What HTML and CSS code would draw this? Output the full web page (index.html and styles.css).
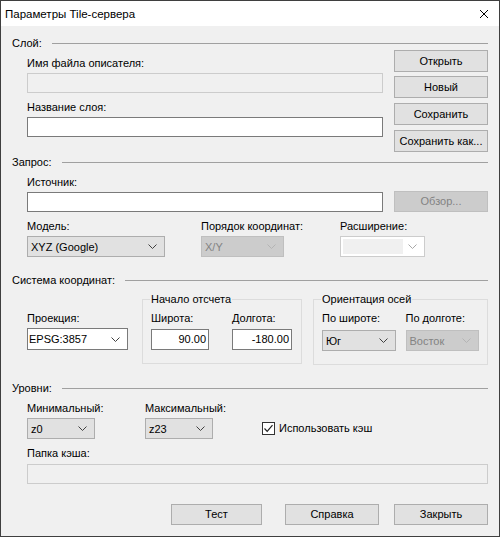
FILE: index.html
```html
<!DOCTYPE html>
<html lang="ru">
<head>
<meta charset="utf-8">
<title>Параметры Tile-сервера</title>
<link rel="stylesheet" href="styles.css">
</head>
<body>
<div class="window">
  <div class="titlebar">
    <span class="title">Параметры Tile-сервера</span>
    <svg class="close" width="10" height="10" viewBox="0 0 10 10"><path d="M1 1 L9 9 M9 1 L1 9" stroke="#000" stroke-width="1" fill="none"/></svg>
  </div>
  <div class="content">
    <div class="sect-head"><span>Слой:</span><div class="rule"></div></div>
    <div class="layer-body">
      <div class="col-main">
        <div class="lbl lbl-first">Имя файла описателя:</div>
        <div class="edit edit-disabled"></div>
        <div class="lbl lbl-second">Название слоя:</div>
        <div class="edit"></div>
      </div>
      <div class="col-btns">
        <div class="btn b1">Открыть</div>
        <div class="btn b2">Новый</div>
        <div class="btn b3">Сохранить</div>
        <div class="btn b3">Сохранить как...</div>
      </div>
    </div>

    <div class="sect-head head-query"><span>Запрос:</span><div class="rule"></div></div>
    <div class="query-body">
      <div class="lbl lbl-first">Источник:</div>
      <div class="src-row">
        <div class="edit src-edit"></div>
        <div class="btn btn-disabled browse">Обзор...</div>
      </div>
      <div class="model-row">
        <div class="fcol model-col">
          <div class="lbl">Модель:</div>
          <div class="combo"><span>XYZ (Google)</span><svg class="chev" width="9" height="5" viewBox="0 0 9 5"><path d="M0.5 0.5 L4.5 4.5 L8.5 0.5" stroke="#404040" fill="none"/></svg></div>
        </div>
        <div class="fcol order-col">
          <div class="lbl">Порядок координат:</div>
          <div class="combo combo-disabled"><span>X/Y</span><svg class="chev" width="9" height="5" viewBox="0 0 9 5"><path d="M0.5 0.5 L4.5 4.5 L8.5 0.5" stroke="#b4b4b4" fill="none"/></svg></div>
        </div>
        <div class="fcol ext-col">
          <div class="lbl">Расширение:</div>
          <div class="combo combo-edit-disabled"><span class="inner-fill"></span><svg class="chev" width="9" height="5" viewBox="0 0 9 5"><path d="M0.5 0.5 L4.5 4.5 L8.5 0.5" stroke="#a8a8a8" fill="none"/></svg></div>
        </div>
      </div>
    </div>

    <div class="sect-head head-coord"><span>Система координат:</span><div class="rule"></div></div>
    <div class="coord-body">
      <div class="fcol proj-col">
        <div class="lbl">Проекция:</div>
        <div class="combo combo-edit"><span>EPSG:3857</span><svg class="chev" width="9" height="5" viewBox="0 0 9 5"><path d="M0.5 0.5 L4.5 4.5 L8.5 0.5" stroke="#404040" fill="none"/></svg></div>
      </div>
      <fieldset class="group group-origin">
        <legend>Начало отсчета</legend>
        <div class="group-row">
          <div class="fcol lat-col">
            <div class="lbl">Широта:</div>
            <div class="edit num">90.00</div>
          </div>
          <div class="fcol lon-col">
            <div class="lbl">Долгота:</div>
            <div class="edit num">-180.00</div>
          </div>
        </div>
      </fieldset>
      <fieldset class="group group-axes">
        <legend>Ориентация осей</legend>
        <div class="group-row">
          <div class="fcol axis-col">
            <div class="lbl">По широте:</div>
            <div class="combo axis-combo"><span>Юг</span><svg class="chev" width="9" height="5" viewBox="0 0 9 5"><path d="M0.5 0.5 L4.5 4.5 L8.5 0.5" stroke="#404040" fill="none"/></svg></div>
          </div>
          <div class="fcol axis-col axis-col2">
            <div class="lbl">По долготе:</div>
            <div class="combo combo-disabled axis-combo"><span>Восток</span><svg class="chev" width="9" height="5" viewBox="0 0 9 5"><path d="M0.5 0.5 L4.5 4.5 L8.5 0.5" stroke="#b4b4b4" fill="none"/></svg></div>
          </div>
        </div>
      </fieldset>
    </div>

    <div class="sect-head head-levels"><span>Уровни:</span><div class="rule"></div></div>
    <div class="levels-body">
      <div class="levels-row">
        <div class="fcol zoom-col">
          <div class="lbl">Минимальный:</div>
          <div class="combo"><span>z0</span><svg class="chev" width="9" height="5" viewBox="0 0 9 5"><path d="M0.5 0.5 L4.5 4.5 L8.5 0.5" stroke="#404040" fill="none"/></svg></div>
        </div>
        <div class="fcol zoom-col zoom-col2">
          <div class="lbl">Максимальный:</div>
          <div class="combo"><span>z23</span><svg class="chev" width="9" height="5" viewBox="0 0 9 5"><path d="M0.5 0.5 L4.5 4.5 L8.5 0.5" stroke="#404040" fill="none"/></svg></div>
        </div>
        <div class="fcol cache-col">
          <div class="lbl lbl-spacer"></div>
          <div class="check-row">
            <span class="checkbox"><svg width="11" height="11" viewBox="0 0 11 11"><path d="M1.5 5.5 L4.2 8.3 L9.5 2.2" stroke="#202020" stroke-width="1.2" fill="none"/></svg></span>
            <span class="check-label">Использовать кэш</span>
          </div>
        </div>
      </div>
      <div class="lbl lbl-cache">Папка кэша:</div>
      <div class="edit edit-disabled cache-edit"></div>
    </div>

    <div class="footer">
      <div class="btn f-test">Тест</div>
      <div class="btn f-help">Справка</div>
      <div class="btn f-close">Закрыть</div>
    </div>
  </div>
</div>
</body>
</html>
```

FILE: styles.css
```css
html, body {
  margin: 0;
  padding: 0;
  background: #f0f0f0;
}
body {
  font-family: "Liberation Sans", Arial, sans-serif;
  font-size: 11px;
  color: #000;
}
.window {
  width: 500px;
  height: 537px;
  box-sizing: border-box;
  border: 1px solid #3f3f3f;
  background: #f0f0f0;
  overflow: hidden;
}
.titlebar {
  height: 25px;
  background: #fff;
  display: flex;
  align-items: center;
  justify-content: space-between;
  padding: 0 10px 0 4px;
}
.title {
  font-size: 11.5px;
  line-height: 15px;
  padding-top: 1px;
}
.close {
  display: block;
  margin-top: 1px;
}
.content {
  padding: 10px 11px 0 11px;
}
.sect-head {
  display: flex;
  align-items: center;
  height: 14px;
  line-height: 14px;
}
.sect-head span {
  white-space: nowrap;
}
.rule {
  flex: 1;
  height: 1px;
  background: #a0a0a0;
  margin-left: 10px;
  margin-top: 0;
}
.lbl {
  height: 15px;
  line-height: 15px;
  white-space: nowrap;
}
.edit {
  box-sizing: border-box;
  height: 20px;
  border: 1px solid #7a7a7a;
  background: #fff;
  line-height: 18px;
  padding: 0 2px;
}
.edit-disabled {
  border-color: #cccccc;
  background: #f0f0f0;
}
.btn {
  box-sizing: border-box;
  height: 22px;
  border: 1px solid #adadad;
  background: #e1e1e1;
  text-align: center;
  line-height: 20px;
  white-space: nowrap;
}
.btn-disabled {
  background: #cccccc;
  border-color: #bfbfbf;
  color: #838383;
}

/* Layer section */
.layer-body {
  display: flex;
  align-items: flex-start;
  margin-left: 15px;
}
.col-main {
  width: 356px;
}
.lbl-first {
  margin-top: 6px;
}
.col-main .edit {
  margin-top: 2px;
}
.lbl-second {
  margin-top: 7px;
}
.col-btns {
  width: 94px;
  margin-left: 11px;
}
.b2 {
  margin-top: 4px;
}
.b3 {
  margin-top: 5px;
}

/* Query section */
.head-query {
  margin-top: 3px;
}
.query-body {
  margin-left: 15px;
}
.src-row {
  display: flex;
  align-items: flex-start;
  margin-top: 1px;
  height: 21px;
}
.src-edit {
  width: 356px;
  margin-top: 1px;
}
.browse {
  width: 94px;
  height: 21px;
  line-height: 19px;
  margin-left: 11px;
}
.model-row {
  display: flex;
  margin-top: 7px;
}
.fcol {
  display: flex;
  flex-direction: column;
}
.combo {
  box-sizing: border-box;
  height: 21px;
  margin-top: 2px;
  border: 1px solid #adadad;
  background: #e1e1e1;
  display: flex;
  align-items: center;
  justify-content: space-between;
  padding: 0 7px 0 3px;
  white-space: nowrap;
}
.chev {
  display: block;
  flex: none;
}
.combo-disabled {
  background: #cccccc;
  border-color: #bfbfbf;
  color: #838383;
}
.combo-edit {
  background: #fff;
  border-color: #7a7a7a;
  padding-left: 1px;
}
.combo-edit-disabled {
  background: #fff;
  border-color: #cccccc;
  padding-left: 2px;
}
.inner-fill {
  display: block;
  width: 60px;
  height: 15px;
  background: #f0f0f0;
}
.model-col {
  width: 138px;
}
.order-col {
  width: 83px;
  margin-left: 36px;
}
.ext-col {
  width: 85px;
  margin-left: 56px;
}

/* Coordinate system section */
.head-coord {
  margin-top: 16px;
}
.coord-body {
  display: flex;
  align-items: flex-start;
  margin-left: 15px;
  margin-top: 5px;
}
.proj-col {
  width: 101px;
  padding-top: 19px;
}
.proj-col .combo {
  height: 22px;
  margin-top: 2px;
}
.group {
  margin: 0;
  border: 1px solid #dcdcdc;
  padding: 0 8px 13px 8px;
  min-width: 0;
}
.group legend {
  padding: 0 1px;
  margin-left: -1px;
  line-height: 14px;
  height: 14px;
}
.group-origin {
  width: 160px;
  box-sizing: border-box;
  margin-left: 14px;
}
.group-axes {
  width: 175px;
  box-sizing: border-box;
  margin-left: 11px;
}
.group-row {
  display: flex;
  padding-top: 5px;
}
.lat-col {
  width: 58px;
}
.lon-col {
  width: 60px;
  margin-left: 23px;
}
.num {
  height: 21px;
  margin-top: 3px;
  text-align: right;
  line-height: 19px;
  padding-right: 2px;
}
.axis-col {
  width: 74px;
}
.axis-col2 {
  margin-left: 10px;
}
.axis-combo {
  margin-top: 4px;
}

/* Levels section */
.head-levels {
  margin-top: 16px;
}
.levels-body {
  margin-left: 15px;
}
.levels-row {
  display: flex;
  margin-top: 6px;
}
.zoom-col {
  width: 68px;
}
.zoom-col2 {
  margin-left: 50px;
}
.cache-col {
  margin-left: 49px;
}
.check-row {
  display: flex;
  align-items: center;
  height: 21px;
  margin-top: 2px;
}
.checkbox {
  box-sizing: border-box;
  width: 13px;
  height: 13px;
  border: 1px solid #333;
  background: #fff;
  display: flex;
  align-items: center;
  justify-content: center;
}
.checkbox svg {
  display: block;
}
.check-label {
  margin-left: 4px;
  line-height: 15px;
}
.lbl-cache {
  margin-top: 7px;
}
.cache-edit {
  margin-top: 3px;
  width: 461px;
}

/* Footer */
.footer {
  display: flex;
  justify-content: flex-end;
  margin-top: 20px;
}
.footer .btn {
  height: 21px;
  line-height: 19px;
}
.f-test {
  width: 91px;
}
.f-help {
  width: 94px;
  margin-left: 23px;
}
.f-close {
  width: 94px;
  margin-left: 15px;
}
```
